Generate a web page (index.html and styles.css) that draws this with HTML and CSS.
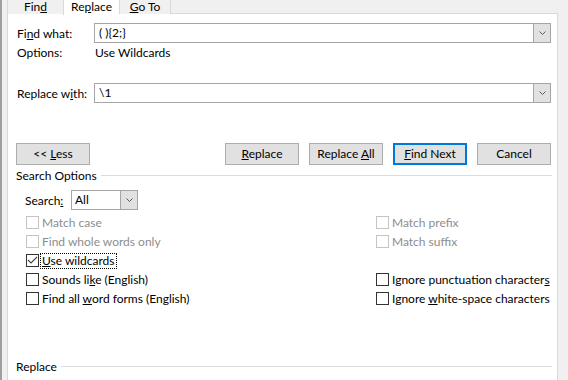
FILE: index.html
```html
<!DOCTYPE html>
<html>
	<head>
		<meta charset="UTF-8">
		<title>Find and Replace</title>
		<link rel="stylesheet" href="styles.css">
	</head>
	<body>
		<div class="window">
			<div class="tabs">
				<div class="tab tab-find">Fin<u>d</u></div>
				<div class="tab tab-replace">Re<u>p</u>lace</div>
				<div class="tab tab-goto"><u>G</u>o To</div>
			</div>
			<div class="panel">
				<div class="field field-find">
					<span class="label">Fi<u>n</u>d what:</span>
					<div class="combo">
						<span class="combo-text">( ){2;}</span>
						<span class="combo-btn"><svg width="7" height="4" viewBox="0 0 7 4"><polyline points="0.5,0.5 3.5,3.5 6.5,0.5" fill="none" stroke="#5a5a5a" stroke-width="1"/></svg></span>
					</div>
				</div>
				<div class="options">
					<span class="label">Options:</span>
					<span class="options-value">Use Wildcards</span>
				</div>
				<div class="field field-replace">
					<span class="label">Replace w<u>i</u>th:</span>
					<div class="combo">
						<span class="combo-text">\1</span>
						<span class="combo-btn"><svg width="7" height="4" viewBox="0 0 7 4"><polyline points="0.5,0.5 3.5,3.5 6.5,0.5" fill="none" stroke="#5a5a5a" stroke-width="1"/></svg></span>
					</div>
				</div>
				<div class="buttons">
					<div class="btn">&lt;&lt; <u>L</u>ess</div>
					<div class="btn btn-first"><u>R</u>eplace</div>
					<div class="btn">Replace <u>A</u>ll</div>
					<div class="btn btn-default"><u>F</u>ind Next</div>
					<div class="btn">Cancel</div>
				</div>
				<div class="group-title">
					<span>Search Options</span>
					<span class="group-line"></span>
				</div>
				<div class="search-row">
					<span class="search-label">Search<u>:</u></span>
					<div class="select">
						<span class="select-text">All</span>
						<span class="select-btn"><svg width="7" height="4" viewBox="0 0 7 4"><polyline points="0.5,0.5 3.5,3.5 6.5,0.5" fill="none" stroke="#5a5a5a" stroke-width="1"/></svg></span>
					</div>
				</div>
				<div class="checks">
					<div class="check check-off"><span class="box"></span><span class="check-label">Match case</span></div>
					<div class="check check-off"><span class="box"></span><span class="check-label">Match prefix</span></div>
					<div class="check check-off"><span class="box"></span><span class="check-label">Find whole words only</span></div>
					<div class="check check-off"><span class="box"></span><span class="check-label">Match suffix</span></div>
					<div class="check"><span class="box"><svg width="11" height="11" viewBox="0 0 11 11"><polyline points="1,5 4,8 10,2" fill="none" stroke="#444" stroke-width="1.1"/></svg></span><span class="check-label check-focus"><u>U</u>se wildcards</span></div>
					<div class="check check-empty"></div>
					<div class="check"><span class="box"></span><span class="check-label">Sounds li<u>k</u>e (English)</span></div>
					<div class="check"><span class="box"></span><span class="check-label">Ignore punctuation character<u>s</u></span></div>
					<div class="check"><span class="box"></span><span class="check-label">Find all <u>w</u>ord forms (English)</span></div>
					<div class="check"><span class="box"></span><span class="check-label">Ignore <u>w</u>hite-space characters</span></div>
				</div>
				<div class="group-title group-replace">
					<span>Replace</span>
					<span class="group-line"></span>
				</div>
			</div>
		</div>
	</body>
</html>
```
FILE: styles.css
```css
*{
	margin: 0;
	padding: 0;
	box-sizing: border-box;
}
body{
	width: 568px;
	height: 380px;
	overflow: hidden;
	background: #f0f0f0;
	color: #000;
	font: 12px "Segoe UI", Lato, "Liberation Sans", sans-serif;
}
.window{
	height: 380px;
	border-left: 2px solid #a0a0a0;
	padding-left: 5px;
}
.tabs{
	display: flex;
	height: 14px;
}
.tab{
	height: 14px;
	line-height: 14px;
	text-align: center;
	background: #f0f0f0;
	border-left: 1px solid #d9d9d9;
}
.tab-find{
	width: 56px;
}
.tab-replace{
	width: 56px;
	height: 15px;
	line-height: 13px;
	background: #fff;
	position: relative;
	z-index: 1;
}
.tab-goto{
	width: 52px;
	border-right: 1px solid #d9d9d9;
}
.panel{
	width: 551px;
	height: 380px;
	margin-top: -1px;
	background: #fff;
	border: 1px solid #d9d9d9;
	padding: 0 5px 0 8px;
}
.field{
	display: flex;
	align-items: center;
	height: 20px;
}
.field-find{
	margin-top: 9px;
}
.field-replace{
	margin-top: 23px;
}
.label{
	width: 78px;
	padding-left: 1px;
}
.combo{
	flex: 1;
	height: 20px;
	display: flex;
	border: 1px solid #a6a6a6;
	margin-right: 1px;
}
.combo-text{
	flex: 1;
	padding-left: 4px;
	line-height: 18px;
}
.combo-btn,
.select-btn{
	width: 17px;
	display: flex;
	align-items: center;
	justify-content: center;
	background: #e1e1e1;
	border-left: 1px solid #a6a6a6;
}
.options{
	display: flex;
	align-items: center;
	height: 16px;
	margin-top: 1px;
}
.options-value{
	padding-left: 1px;
}
.buttons{
	display: flex;
	gap: 10px;
	height: 22px;
	margin-top: 40px;
	padding-right: 1px;
}
.btn{
	width: 74px;
	height: 22px;
	line-height: 20px;
	text-align: center;
	background: #e1e1e1;
	border: 1px solid #adadad;
}
.btn-first{
	margin-left: auto;
}
.btn-default{
	border: 2px solid #0078d7;
	line-height: 18px;
}
.group-title{
	display: flex;
	align-items: center;
	gap: 4px;
	height: 14px;
	margin-top: 3px;
}
.group-line{
	flex: 1;
	height: 1px;
	background: #dcdcdc;
}
.group-replace{
	margin-top: 51px;
}
.search-row{
	display: flex;
	align-items: center;
	height: 20px;
	margin-top: 8px;
	padding-left: 9px;
}
.search-label{
	width: 46px;
}
.select{
	width: 67px;
	height: 20px;
	display: flex;
	border: 1px solid #a6a6a6;
}
.select-text{
	flex: 1;
	padding-left: 3px;
	line-height: 18px;
}
.checks{
	display: grid;
	grid-template-columns: 350px 1fr;
	grid-auto-rows: 19px;
	margin-top: 3px;
	padding-left: 10px;
}
.check{
	display: flex;
	align-items: center;
	gap: 1px;
}
.box{
	width: 13px;
	height: 13px;
	display: flex;
	align-items: center;
	justify-content: center;
	background: #fff;
	border: 1px solid #333;
}
.check-label{
	padding: 0 1px;
	line-height: 14px;
	border: 1px dotted transparent;
}
.check-focus{
	border-color: #000;
}
.check-off .box{
	border-color: #c4c4c4;
}
.check-off .check-label{
	color: #8d8d8d;
}
```
